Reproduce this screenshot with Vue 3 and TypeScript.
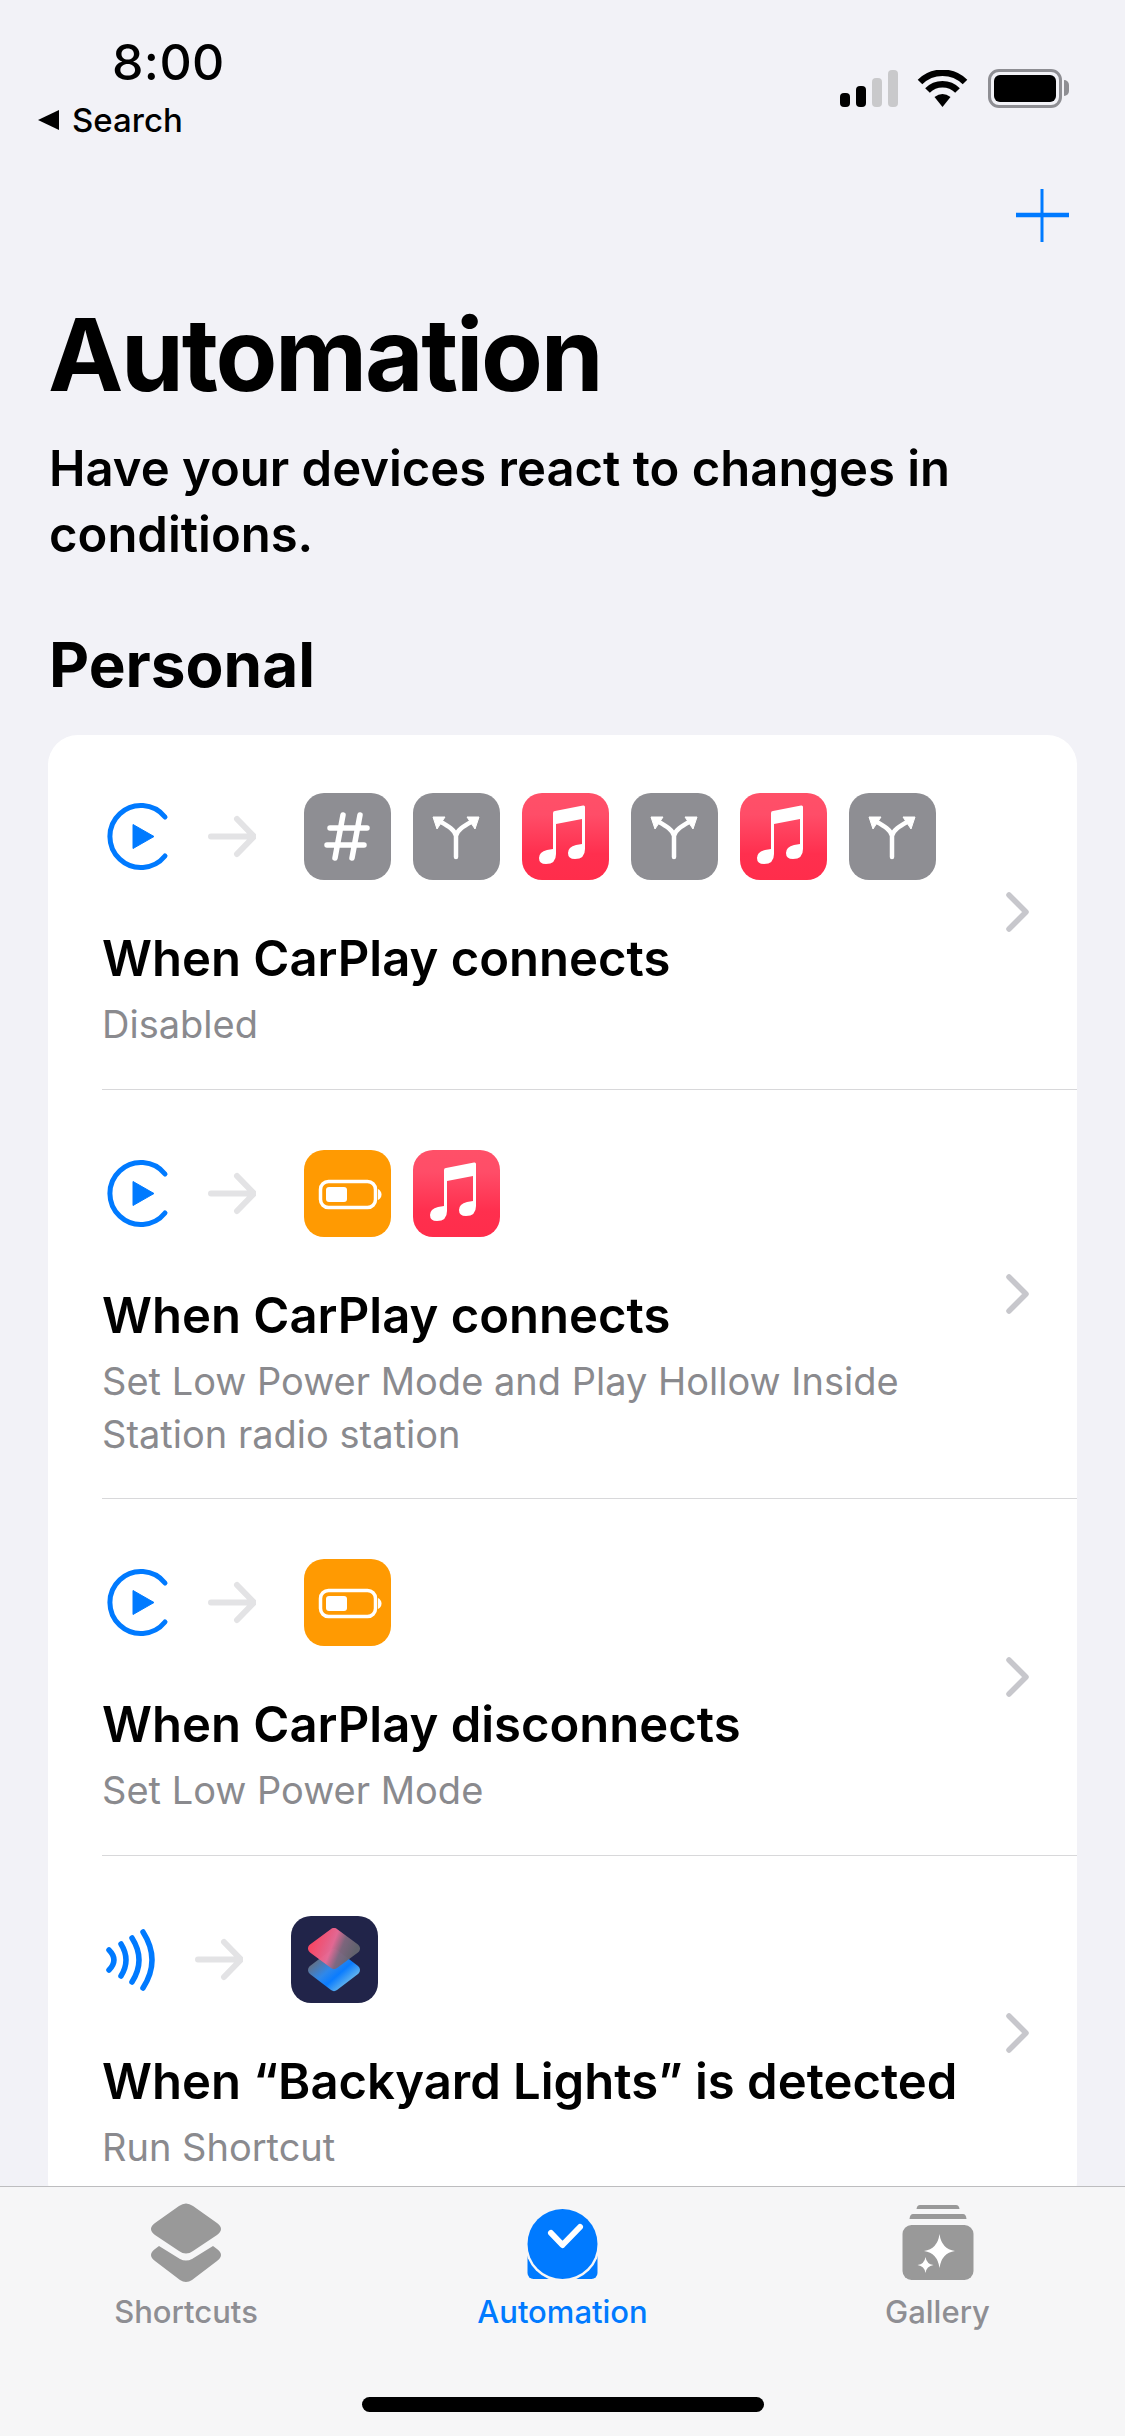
<script setup lang="ts">
type Tile = { glyph: string; tone: string }
type Row = { id: number; trigger: string; tiles: Tile[]; title: string; lines: string[] }

const hash: Tile = { glyph: 'hash', tone: 'gray' }
const fork: Tile = { glyph: 'fork', tone: 'gray' }
const music: Tile = { glyph: 'music', tone: 'red' }
const power: Tile = { glyph: 'power', tone: 'orange' }
const shortcut: Tile = { glyph: 'shortcut', tone: 'navy' }

const rows: Row[] = [
  { id: 1, trigger: 'carplay', tiles: [hash, fork, music, fork, music, fork], title: 'When CarPlay connects', lines: ['Disabled'] },
  { id: 2, trigger: 'carplay', tiles: [power, music], title: 'When CarPlay connects', lines: ['Set Low Power Mode and Play Hollow Inside', 'Station radio station'] },
  { id: 3, trigger: 'carplay', tiles: [power], title: 'When CarPlay disconnects', lines: ['Set Low Power Mode'] },
  { id: 4, trigger: 'nfc', tiles: [shortcut], title: 'When “Backyard Lights” is detected', lines: ['Run Shortcut'] }
]
</script>

<template>
  <div class="phone">
    <svg class="defs" aria-hidden="true">
      <defs>
        <linearGradient id="grad-top" x1="0" y1="0.3" x2="1" y2="0.6">
          <stop offset="0" stop-color="#ff4a68" />
          <stop offset="0.45" stop-color="#ea6b96" />
          <stop offset="0.68" stop-color="#80687f" />
          <stop offset="1" stop-color="#64656f" />
        </linearGradient>
        <linearGradient id="grad-bottom" x1="0" y1="0.2" x2="0.8" y2="0.9">
          <stop offset="0" stop-color="#686d7c" />
          <stop offset="0.45" stop-color="#2f88ea" />
          <stop offset="0.7" stop-color="#0a7cff" />
          <stop offset="1" stop-color="#5aaeee" />
        </linearGradient>
      </defs>
      <symbol id="hash" viewBox="0 0 87 87">
        <path d="M26 35H63M23 52H60M39 22 31 65M56 22 48 65" fill="none" stroke="#fff" stroke-width="5.500" stroke-linecap="round" />
      </symbol>
      <symbol id="fork" viewBox="0 0 87 87">
        <path d="M43 64V43C42 37 35 33 28 29M43 43C44 37 51 33 58 29" fill="none" stroke="#fff" stroke-width="4.500" stroke-linecap="round" />
        <path d="M20 24H32L24 36ZM66 24H54L62 36Z" fill="#fff" stroke="#fff" stroke-width="1" stroke-linejoin="round" />
      </symbol>
      <symbol id="music" viewBox="0 0 87 87">
        <path d="M31 20Q31 18 33 18L61 12.500Q63 12 63 14V56Q63 66 53 66Q46 66 46 60Q46 54 54 52L60 51V26L34 31V61Q34 71 24 71Q17 71 17 65Q17 59 25 57L31 56Z" fill="#fff" />
      </symbol>
      <symbol id="power" viewBox="0 0 87 87">
        <rect x="16.500" y="31.500" width="55" height="26" rx="8" fill="none" stroke="#fff" stroke-width="3.500" />
        <rect x="22" y="37" width="21" height="15" rx="3" fill="#fff" />
        <path d="M74 39Q77.500 41 77.500 44.500Q77.500 48 74 50Z" fill="#fff" />
      </symbol>
      <symbol id="shortcut" viewBox="0 0 87 87">
        <path d="M43 38 64 54 43 70 22 54Z" fill="url(#grad-bottom)" stroke="url(#grad-bottom)" stroke-width="10" stroke-linejoin="round" />
        <path d="M43 17 64 32.500 43 48 22 32.500Z" fill="url(#grad-top)" stroke="url(#grad-top)" stroke-width="10" stroke-linejoin="round" opacity="0.96" />
      </symbol>
    </svg>

    <main class="content">
      <header class="status">
        <div class="status-left">
          <div class="time">8:00</div>
          <div class="back"><span class="back-arrow"></span><span>Search</span></div>
        </div>
        <div class="status-right">
          <div class="signal">
            <span class="bar bar-1"></span>
            <span class="bar bar-2"></span>
            <span class="bar bar-3"></span>
            <span class="bar bar-4"></span>
          </div>
          <svg class="wifi" width="51" height="37" viewBox="0 0 51 37">
            <path d="M3 12A32 32 0 0 1 48 12M10.500 20.500A21 21 0 0 1 40.500 20.500" fill="none" stroke="#000" stroke-width="6.500" />
            <path d="M25.500 37 17.500 27Q25.500 21 33.500 27Z" fill="#000" />
          </svg>
          <div class="battery"><span class="battery-fill"></span><span class="battery-nib"></span></div>
        </div>
      </header>

      <div class="actions">
        <svg width="53" height="53" viewBox="0 0 53 53">
          <path d="M26 0V53" stroke="#007aff" stroke-width="3" />
          <path d="M0 26H53" stroke="#007aff" stroke-width="4.500" />
        </svg>
      </div>

      <h1 class="title">Automation</h1>
      <p class="lede">Have your devices react to changes in<br />conditions.</p>
      <h2 class="section">Personal</h2>

      <section class="card">
        <article v-for="row in rows" :key="row.id" class="row">
          <div class="row-body">
            <div class="flow">
              <svg v-if="row.trigger === 'carplay'" class="trigger" width="66" height="87" viewBox="0 0 66 87">
                <path d="M61 24A31 31 0 1 0 61 63" fill="none" stroke="#007aff" stroke-width="5" stroke-linecap="round" />
                <path d="M29 31.500 50 43.500 29 55.500Z" fill="#007aff" stroke="#007aff" stroke-width="1" stroke-linejoin="round" />
              </svg>
              <svg v-else class="trigger" width="53" height="87" viewBox="0 0 53 87">
                <path d="M5 34Q15 44 5 54M17 28Q27 44 17 60M28 22Q42 44 28 66M39 16Q57 44 39 72" fill="none" stroke="#007aff" stroke-width="5.500" stroke-linecap="round" />
              </svg>
              <svg class="arrow" width="48" height="87" viewBox="0 0 48 87">
                <path d="M3 43.500H45M29 26 46 43.500 29 61" fill="none" stroke="#e3e3e5" stroke-width="6" stroke-linecap="round" stroke-linejoin="round" />
              </svg>
              <div class="tiles">
                <div v-for="(tile, index) in row.tiles" :key="index" class="tile" :class="tile.tone">
                  <svg width="87" height="87"><use :href="'#' + tile.glyph" /></svg>
                </div>
              </div>
            </div>
            <div class="row-title">{{ row.title }}</div>
            <div class="row-sub">
              <div v-for="line in row.lines" :key="line">{{ line }}</div>
            </div>
          </div>
          <svg class="chevron" width="24" height="40" viewBox="0 0 24 40">
            <path d="M3 3 20 20 3 37" fill="none" stroke="#c7c7cc" stroke-width="5.500" stroke-linecap="round" stroke-linejoin="round" />
          </svg>
        </article>
      </section>
    </main>

    <nav class="tabbar">
      <div class="tab">
        <svg width="90" height="90" viewBox="0 0 90 90">
          <g transform="translate(3 0)" fill="#999">
            <path d="M33 6Q40 1 47 6L71 23Q79 29 71 35L47 51Q40 56 33 51L9 35Q1 29 9 23Z" />
            <path d="M13 46 34 59Q40 62 46 59L67 46 71 49Q79 55 71 61L46 80Q40 84 34 80L9 61Q1 55 9 49Z" />
          </g>
        </svg>
        <span class="label-shortcuts">Shortcuts</span>
      </div>
      <div class="tab active">
        <svg width="90" height="90" viewBox="0 0 90 90">
          <rect x="9.500" y="50" width="70" height="29" rx="6" fill="#007aff" />
          <circle cx="44.500" cy="44" r="37.500" fill="#f6f6f7" />
          <circle cx="44.500" cy="44" r="35" fill="#007aff" />
          <path d="M33 33 44.500 45 62 27" fill="none" stroke="#fff" stroke-width="6" stroke-linecap="round" stroke-linejoin="round" />
        </svg>
        <span>Automation</span>
      </div>
      <div class="tab">
        <svg width="90" height="90" viewBox="0 0 90 90">
          <path d="M23.500 9Q24 5 27 5H63Q66 5 66.500 9Z" fill="#999" />
          <path d="M16.500 19Q17 14 20 14H70Q73 14 73.500 19Z" fill="#999" />
          <rect x="9.500" y="25" width="71" height="55" rx="9" fill="#999" />
          <path d="M46.500 34Q48.500 49 62 51Q48.500 53 46.500 68Q44.500 53 31 51Q44.500 49 46.500 34Z" fill="#fff" />
          <path d="M32.500 57Q33.500 64 40.500 65Q33.500 66 32.500 73Q31.500 66 24.500 65Q31.500 64 32.500 57Z" fill="#fff" />
        </svg>
        <span>Gallery</span>
      </div>
      <div class="home"></div>
    </nav>
  </div>
</template>

<style>
html,
body {
  margin: 0;
  background: #f2f2f7;
}
</style>

<style scoped>
.phone {
  width: 1125px;
  height: 2436px;
  display: flex;
  flex-direction: column;
  overflow: hidden;
  background: #f2f2f7;
  color: #000;
  font-family: Inter, "Liberation Sans", sans-serif;
}
.defs {
  position: absolute;
  width: 0;
  height: 0;
}
.content {
  flex: 1;
  min-height: 0;
  overflow: hidden;
}
.status {
  display: flex;
  justify-content: space-between;
  align-items: flex-start;
  padding: 30px 56px 0 0;
}
.time {
  margin-left: 112px;
  font-size: 50px;
  font-weight: 500;
  line-height: 64px;
  letter-spacing: 0.4px;
}
.back {
  display: flex;
  align-items: center;
  gap: 13px;
  margin: 1px 0 0 38px;
  font-size: 33px;
  font-weight: 500;
  line-height: 50px;
}
.back-arrow {
  width: 0;
  height: 0;
  border-top: 10px solid transparent;
  border-bottom: 10px solid transparent;
  border-right: 21px solid #000;
}
.status-right {
  display: flex;
  align-items: flex-end;
  margin-top: 39px;
}
.signal {
  display: flex;
  align-items: flex-end;
  gap: 6px;
  margin-right: 19px;
}
.bar {
  width: 10px;
  border-radius: 4px;
  background: #000;
}
.bar-1 { height: 14px; }
.bar-2 { height: 21px; }
.bar-3 { height: 29px; background: #c9c9cb; }
.bar-4 { height: 37px; background: #c9c9cb; }
.wifi {
  margin-right: 20px;
}
.battery {
  position: relative;
  box-sizing: border-box;
  width: 74px;
  height: 39px;
  margin-right: 7px;
  margin-bottom: -1px;
  padding: 3px;
  border: 3px solid #8e8e93;
  border-radius: 11px;
}
.battery-fill {
  display: block;
  width: 100%;
  height: 100%;
  border-radius: 6px;
  background: #000;
}
.battery-nib {
  position: absolute;
  top: 8px;
  right: -10px;
  width: 5px;
  height: 16px;
  border-radius: 0 6px 6px 0;
  background: #8e8e93;
}
.actions {
  display: flex;
  justify-content: flex-end;
  margin-top: 44px;
  padding-right: 56px;
}
.actions svg {
  display: block;
}
.title {
  margin: 52px 0 0 48px;
  font-size: 101px;
  font-weight: 700;
  line-height: 120px;
  letter-spacing: -2.3px;
}
.lede {
  margin: 22px 0 0 49px;
  font-size: 49px;
  font-weight: 600;
  line-height: 66px;
}
.section {
  margin: 57px 0 0 49px;
  font-size: 62px;
  font-weight: 700;
  line-height: 80px;
}
.card {
  margin: 30px 48px 0;
  padding-left: 54px;
  border-radius: 30px;
  background: #fff;
}
.row {
  display: flex;
  align-items: center;
  border-bottom: 1px solid #d8d8da;
}
.row:last-child {
  border-bottom: 0;
}
.row-body {
  flex: 1;
  min-width: 0;
  padding: 60px 0 37.5px;
}
.row:first-child .row-body {
  padding-top: 58px;
}
.flow {
  display: flex;
  align-items: center;
  padding-left: 2px;
}
.trigger {
  display: block;
  margin-right: 38px;
}
.arrow {
  display: block;
  margin-right: 48px;
}
.tiles {
  display: flex;
  gap: 22px;
}
.tile {
  width: 87px;
  height: 87px;
  border-radius: 20px;
}
.tile svg {
  display: block;
}
.gray { background: #8e8e93; }
.red { background: linear-gradient(#ff5068 0%, #ff4d68 25%, #ff2f4e 70%, #ff2d4b 100%); }
.orange { background: #ff9a02; }
.navy { background: #212449; }
.row-title {
  margin-top: 49px;
  font-size: 49px;
  font-weight: 600;
  line-height: 60px;
}
.row-sub {
  margin-top: 9px;
  color: #8a8a8e;
  font-size: 38px;
  line-height: 53px;
}
.chevron {
  flex: none;
  margin-right: 47px;
}
.tabbar {
  position: relative;
  flex: none;
  display: grid;
  grid-template-columns: repeat(3, 375px);
  box-sizing: border-box;
  height: 250px;
  padding-top: 13px;
  border-top: 1px solid #bdbdbf;
  background: #f6f6f7;
}
.tab {
  display: flex;
  flex-direction: column;
  align-items: center;
  color: #8e8e93;
  font-size: 31px;
  font-weight: 500;
  line-height: 44px;
}
.tab svg {
  display: block;
}
.label-shortcuts {
  margin-right: 3px;
}
.active {
  color: #007aff;
}
.home {
  position: absolute;
  left: 362px;
  bottom: 24px;
  width: 402px;
  height: 15px;
  border-radius: 8px;
  background: #000;
}
</style>
